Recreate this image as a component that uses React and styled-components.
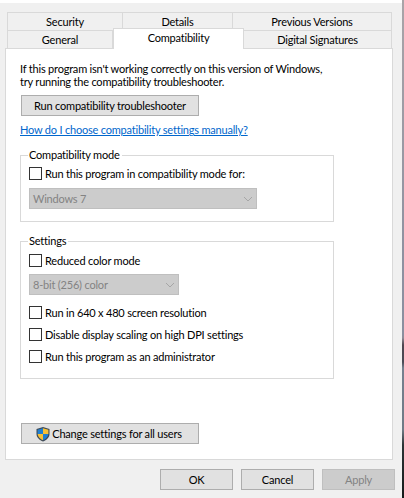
import React from 'react';
import styled, { createGlobalStyle } from 'styled-components';

const Global = createGlobalStyle`
  html, body {
    margin: 0;
    padding: 0;
  }
  body {
    height: 498px;
    background: linear-gradient(
      180deg,
      #a9a4a8 0,
      #8f91a0 250px,
      #8a8f9f 335px,
      #8f8a95 338px,
      #4f4650 345px,
      #4a4a55 362px,
      #76808f 368px,
      #6f7a85 430px,
      #2c3335 445px,
      #161a1a 498px
    );
  }
  * {
    box-sizing: border-box;
  }
`;

const Window = styled.div`
  width: 402px;
  height: 498px;
  padding-top: 3px;
  background: #ffffff;
`;

const Dialog = styled.div`
  height: 495px;
  padding: 9px 9px 0 5px;
  background: #f0f0f0;
  font-family: Lato, 'Liberation Sans', Arial, sans-serif;
  font-size: 11px;
  letter-spacing: -0.2px;
  color: #000;
  display: flex;
  flex-direction: column;
`;

const TabRow = styled.div`
  display: flex;
  height: 18px;
  padding-left: 2px;
  align-items: flex-end;
`;

const Tab = styled.div`
  width: ${p => p.$w}px;
  height: ${p => (p.$active ? '21px' : '18px')};
  margin-bottom: ${p => (p.$active ? '-1px' : '0')};
  padding-bottom: ${p => (p.$active ? '3px' : '0')};
  background: ${p => (p.$active ? '#fff' : '#f0f0f0')};
  border: 1px solid #d9d9d9;
  border-left-width: ${p => (p.$first ? '1px' : '0')};
  border-bottom-width: 0;
  display: flex;
  align-items: center;
  justify-content: center;
  position: relative;
  z-index: ${p => (p.$active ? 2 : 1)};
`;

const Panel = styled.div`
  flex: none;
  height: 412px;
  background: #fff;
  border: 1px solid #d9d9d9;
  padding: 0 14px;
  display: flex;
  flex-direction: column;
`;

const Intro = styled.p`
  margin: 13px 0 0;
  line-height: 13px;
  white-space: nowrap;
`;

const Button = styled.div`
  height: 21px;
  border: 1px solid ${p => (p.$disabled ? '#bfbfbf' : '#adadad')};
  display: flex;
  align-items: center;
  justify-content: center;
  flex: none;
  width: ${p => p.$w}px;
  color: ${p => (p.$disabled ? '#838383' : '#000')};
  background: ${p => (p.$disabled ? '#cccccc' : '#e1e1e1')};
`;

const TroubleshootButton = styled(Button)`
  margin: 7px 0 0 1px;
`;

const HelpLink = styled.a`
  margin-top: 6px;
  color: #0066cc;
  text-decoration: underline;
  line-height: 15px;
  white-space: nowrap;
`;

const Group = styled.fieldset`
  margin: ${p => p.$gap}px 0 0 0;
  width: 314px;
  height: ${p => p.$h}px;
  border: 1px solid #d9d9d9;
  padding: 0 0 0 8px;
  min-width: 0;
`;

const Legend = styled.legend`
  padding: 0 2px 0 1px;
  margin-left: -1px;
  line-height: 14px;
`;

const CheckRow = styled.label`
  display: flex;
  align-items: center;
  height: 13px;
  margin-top: ${p => p.$top}px;
  white-space: nowrap;
`;

const Box = styled.span`
  width: 13px;
  height: 13px;
  border: 1px solid #333;
  background: #fff;
  margin-right: 3px;
  flex: none;
`;

const Select = styled.div`
  width: ${p => p.$w}px;
  height: 21px;
  margin-top: ${p => p.$top}px;
  background: #cccccc;
  border: 1px solid #bfbfbf;
  color: #838383;
  padding: 0 3px;
  display: flex;
  align-items: center;
  justify-content: space-between;
`;

const Shield = styled.svg`
  width: 16px;
  height: 16px;
  margin-right: 1px;
  flex: none;
`;

const ShieldContent = styled.span`
  display: flex;
  align-items: center;
  margin-left: -3px;
`;

const BottomButton = styled(Button)`
  margin: auto 0 15px 1px;
`;

const Footer = styled.div`
  display: flex;
  justify-content: flex-end;
  gap: 8px;
  margin-top: 9px;
  margin-right: -2px;
`;

const Chevron = () => (
  <svg width="10" height="6" viewBox="0 0 10 6" fill="none">
    <path d="M1 1l4 4 4-4" stroke="#a6a6a6" strokeWidth="1" />
  </svg>
);

const App = () => (
  <>
    <Global />
    <Window>
      <Dialog>
        <TabRow>
          <Tab $w={116} $first>Security</Tab>
          <Tab $w={110}>Details</Tab>
          <Tab $w={159}>Previous Versions</Tab>
        </TabRow>
        <TabRow>
          <Tab $w={106} $first>General</Tab>
          <Tab $w={131} $active $first>Compatibility</Tab>
          <Tab $w={148}>Digital Signatures</Tab>
        </TabRow>
        <Panel>
          <Intro>
            If this program isn't working correctly on this version of Windows,
            <br />
            try running the compatibility troubleshooter.
          </Intro>
          <TroubleshootButton $w={178}>Run compatibility troubleshooter</TroubleshootButton>
          <HelpLink>How do I choose compatibility settings manually?</HelpLink>
          <Group $gap={11} $h={74}>
            <Legend>Compatibility mode</Legend>
            <CheckRow $top={5}>
              <Box />
              Run this program in compatibility mode for:
            </CheckRow>
            <Select $w={228} $top={8}>
              Windows 7
              <Chevron />
            </Select>
          </Group>
          <Group $gap={12} $h={145}>
            <Legend>Settings</Legend>
            <CheckRow $top={6}>
              <Box />
              Reduced color mode
            </CheckRow>
            <Select $w={150} $top={7}>
              8-bit (256) color
              <Chevron />
            </Select>
            <CheckRow $top={11}>
              <Box />
              Run in 640 x 480 screen resolution
            </CheckRow>
            <CheckRow $top={9}>
              <Box />
              Disable display scaling on high DPI settings
            </CheckRow>
            <CheckRow $top={9}>
              <Box />
              Run this program as an administrator
            </CheckRow>
          </Group>
          <BottomButton $w={178}>
            <ShieldContent>
              <Shield viewBox="0 0 16 16">
                <path d="M8 1 L14.5 3 V8 C14.5 11.5 11.5 14 8 15.5 C4.5 14 1.5 11.5 1.5 8 V3 Z" fill="#3f4a57" />
                <path d="M8 2.2 V8 H2.6 V3.8 Z" fill="#1f7fd1" />
                <path d="M8 2.2 L13.4 3.8 V8 H8 Z" fill="#f6c136" />
                <path d="M2.6 8 H8 V14.2 C5.2 13 3 11 2.6 8 Z" fill="#f6c136" />
                <path d="M8 8 H13.4 C13 11 10.8 13 8 14.2 Z" fill="#1f7fd1" />
              </Shield>
              Change settings for all users
            </ShieldContent>
          </BottomButton>
        </Panel>
        <Footer>
          <Button $w={73}>OK</Button>
          <Button $w={73}>Cancel</Button>
          <Button $w={73} $disabled>Apply</Button>
        </Footer>
      </Dialog>
    </Window>
  </>
);

export default App;
